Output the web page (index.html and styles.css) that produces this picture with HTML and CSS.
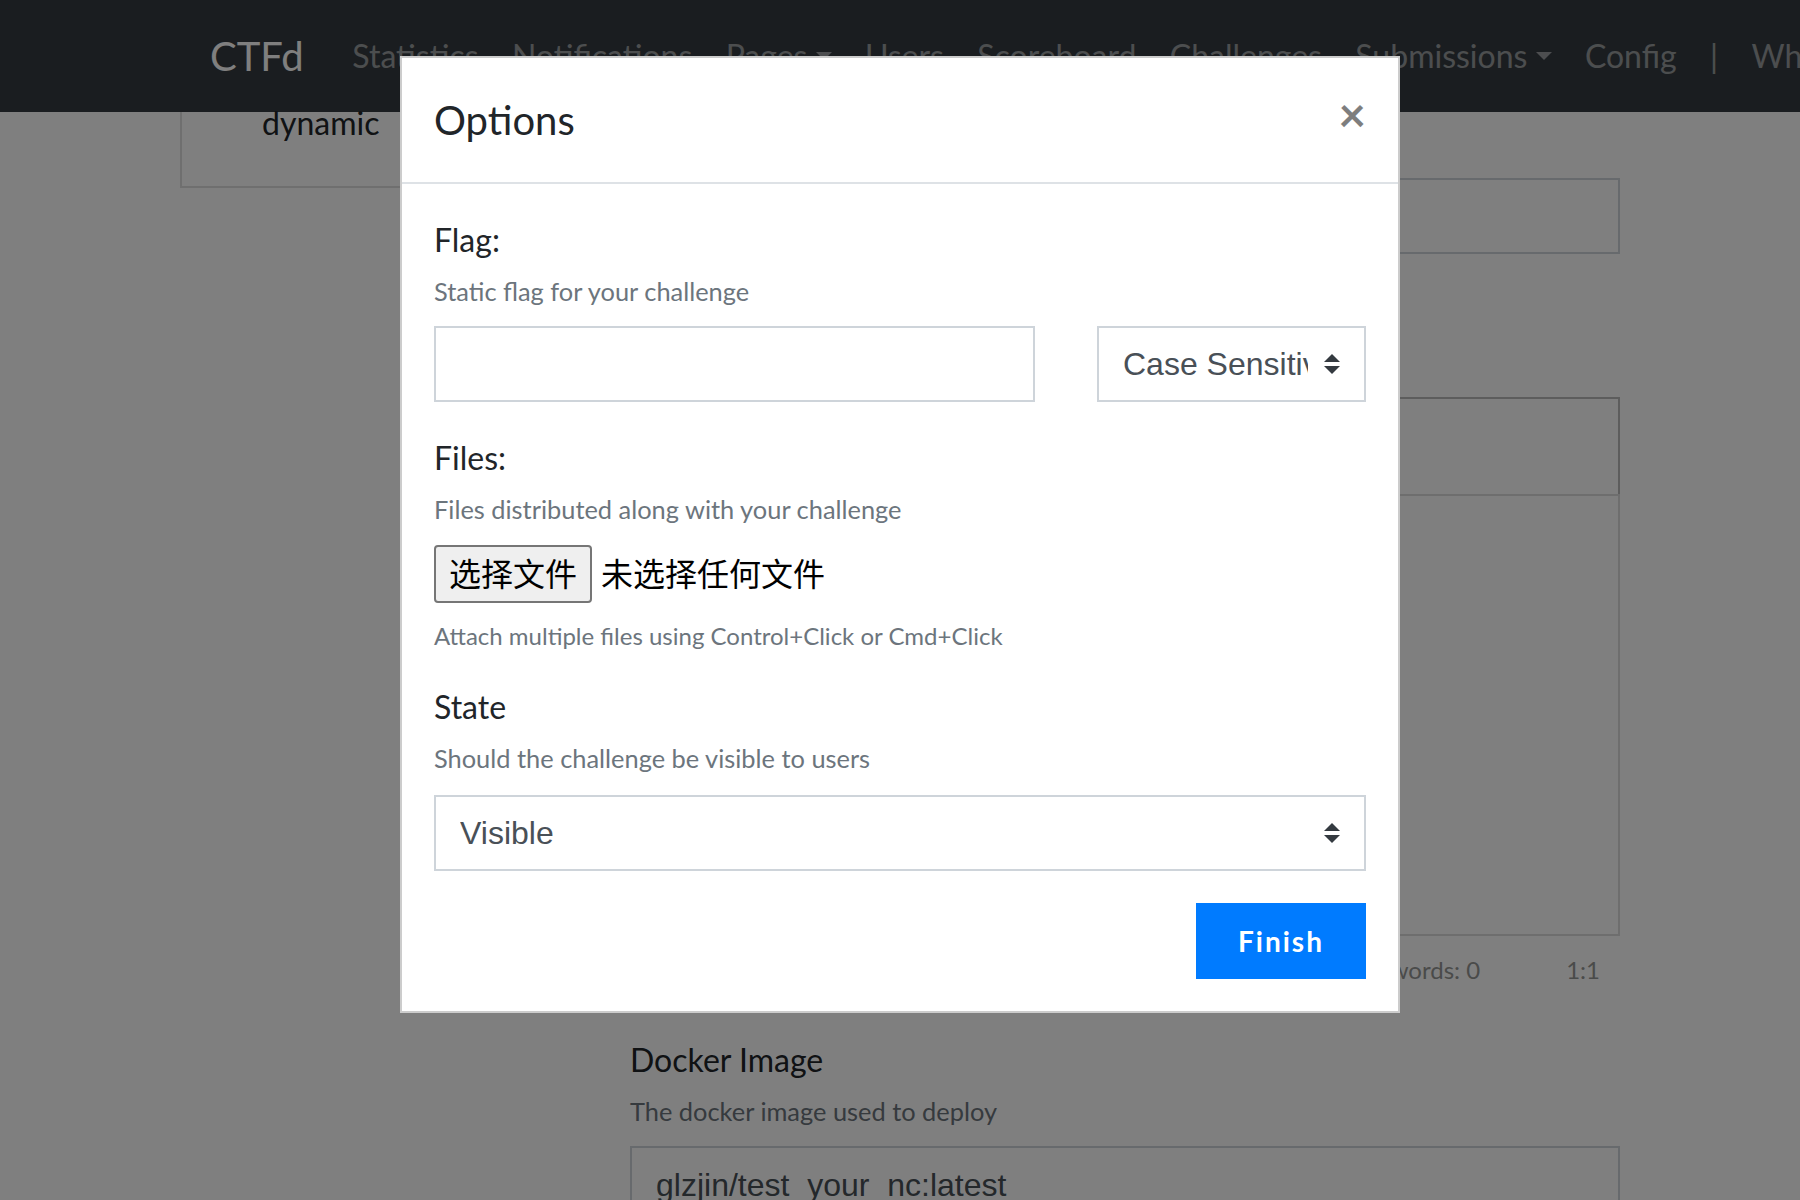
FILE: index.html
```html
<!DOCTYPE html>
<html lang="en">
<head>
<meta charset="utf-8">
<title>CTFd – Create Challenge</title>
<link rel="stylesheet" href="styles.css">
</head>
<body>
<nav class="navbar">
  <div class="nav-inner">
    <a class="brand">CTFd</a>
    <ul class="nav-links">
      <li class="nav-link">Statistics</li>
      <li class="nav-link">Notifications</li>
      <li class="nav-link dropdown">Pages</li>
      <li class="nav-link">Users</li>
      <li class="nav-link">Scoreboard</li>
      <li class="nav-link">Challenges</li>
      <li class="nav-link dropdown">Submissions</li>
      <li class="nav-link">Config</li>
      <li class="nav-link">|</li>
      <li class="nav-link">Whale</li>
    </ul>
  </div>
</nav>

<main class="page">
  <aside class="types">
    <div class="type-item">dynamic</div>
  </aside>
  <section class="create-form">
    <div class="bg-input first"></div>
    <div class="editor">
      <div class="editor-toolbar"></div>
      <div class="editor-area"></div>
      <div class="statusbar"><span class="lines">lines: 1</span><span class="words">words: 0</span><span class="cursor">1:1</span></div>
    </div>
    <div class="bg-group">
      <label class="field-label">Docker Image<small class="form-text">The docker image used to deploy</small></label>
      <div class="bg-input text">glzjin/test_your_nc:latest</div>
    </div>
  </section>
</main>

<div class="backdrop"></div>

<div class="modal">
  <div class="modal-dialog">
    <div class="modal-content">
      <div class="modal-header">
        <h5 class="modal-title">Options</h5>
        <button class="close" type="button">×</button>
      </div>
      <div class="modal-body">
        <div class="form-group">
          <label class="field-label">Flag:<small class="form-text">Static flag for your challenge</small></label>
          <div class="flag-row">
            <div class="form-control"></div>
            <div class="select">
              <span class="select-text">Case Sensitive</span>
              <svg class="select-arrow" viewBox="0 0 4 5" width="16" height="20"><path fill="#343a40" d="M2 0L0 2h4zm0 5L0 3h4z"/></svg>
            </div>
          </div>
        </div>
        <div class="form-group">
          <label class="field-label">Files:<small class="form-text">Files distributed along with your challenge</small></label>
          <div class="file-input"><button class="file-btn" type="button">选择文件</button><span class="file-status">未选择任何文件</span></div>
          <div class="help-line"><sub class="help-block">Attach multiple files using Control+Click or Cmd+Click</sub></div>
        </div>
        <div class="form-group">
          <label class="field-label state-label">State<small class="form-text">Should the challenge be visible to users</small></label>
          <div class="select">
            <span class="select-text">Visible</span>
            <svg class="select-arrow" viewBox="0 0 4 5" width="16" height="20"><path fill="#343a40" d="M2 0L0 2h4zm0 5L0 3h4z"/></svg>
          </div>
        </div>
        <div class="actions">
          <button class="btn-primary" type="button">Finish</button>
        </div>
      </div>
    </div>
  </div>
</div>
</body>
</html>
```

FILE: styles.css
```css
* { box-sizing: border-box; }

html, body {
  margin: 0;
  padding: 0;
  width: 1800px;
  height: 1200px;
  overflow: hidden;
}

body {
  background: #fff;
  font-family: "Lato", "Noto Sans CJK SC", sans-serif;
  font-size: 32px;
  line-height: 1.5;
  color: #212529;
}

/* ---------- navbar ---------- */
.navbar {
  background: #343a40;
  height: 112px;
  padding: 16px 0;
}
.nav-inner {
  width: 1440px;
  margin: 0 auto;
  padding: 0 30px;
  display: flex;
  align-items: center;
  white-space: nowrap;
}
.brand {
  font-size: 40px;
  line-height: 60px;
  padding: 10px 0;
  margin-right: 32px;
  color: #fff;
  flex-shrink: 0;
}
.nav-links {
  display: flex;
  flex-shrink: 0;
  list-style: none;
  margin: 0;
  padding: 0;
}
.nav-link {
  padding: 16px 16.7px;
  line-height: 48px;
  font-size: 32px;
  color: rgba(255, 255, 255, 0.5);
}
.dropdown::after {
  content: "";
  display: inline-block;
  margin-left: 0.255em;
  vertical-align: 0.255em;
  border-top: 0.25em solid;
  border-right: 0.25em solid transparent;
  border-bottom: 0;
  border-left: 0.25em solid transparent;
}

/* ---------- background page ---------- */
.page {
  width: 1440px;
  margin: 0 auto;
  display: flex;
}
.types {
  width: 450px;
  flex-shrink: 0;
}
.type-item {
  width: 400px;
  height: 76px;
  border: 2px solid rgba(0, 0, 0, 0.125);
  border-top: 0;
  padding-left: 80px;
  font-size: 32px;
  line-height: 22px;
}
.create-form {
  flex: 1;
  padding-top: 66px;
}
.bg-input {
  height: 76px;
  border: 2px solid #ced4da;
  background: #fff;
}
.bg-input.text {
  font-family: "Liberation Sans", Arial, sans-serif;
  font-size: 32px;
  line-height: 48px;
  padding: 13px 24px 0;
  color: #495057;
}
.editor {
  margin-top: 143px;
}
.editor-toolbar {
  height: 97px;
  border: 2px solid #bbb;
  border-bottom: 0;
}
.editor-area {
  height: 442px;
  border: 2px solid #ddd;
}
.statusbar {
  display: flex;
  justify-content: flex-end;
  padding: 16px 20px;
  font-size: 24px;
  line-height: 36px;
  color: #959694;
}
.statusbar .lines { margin-right: 24px; }
.statusbar .words { margin-right: 86px; }
.bg-group {
  margin-top: 32px;
}

/* ---------- modal ---------- */
.backdrop {
  position: fixed;
  inset: 0;
  background: rgba(0, 0, 0, 0.5);
}
.modal {
  position: fixed;
  inset: 0;
  overflow: hidden;
}
.modal-dialog {
  width: 1000px;
  margin: 56px auto 0;
}
.modal-content {
  background: #fff;
  border: 2px solid rgba(0, 0, 0, 0.2);
}
.modal-header {
  display: flex;
  align-items: flex-start;
  justify-content: space-between;
  padding: 32px;
  border-bottom: 2px solid #dee2e6;
}
.modal-title {
  margin: 0;
  font-size: 40px;
  font-weight: 400;
  line-height: 60px;
  color: #212529;
}
.close {
  font-family: "Lato", sans-serif;
  background: transparent;
  border: 0;
  padding: 32px;
  margin: -32px -32px -32px auto;
  font-size: 48px;
  font-weight: 700;
  line-height: 1;
  color: #000;
  opacity: 0.5;
  text-shadow: 0 2px 0 #fff;
}
.modal-body {
  padding: 32px;
}
.form-group {
  margin-bottom: 32px;
}
.field-label {
  display: block;
  margin-bottom: 16px;
  font-size: 32px;
  line-height: 48px;
  color: #212529;
}
.state-label {
  margin-bottom: 18px;
}
.form-text {
  display: block;
  margin-top: 8px;
  font-size: 25.4px;
  line-height: 38.4px;
  color: #6c757d;
}
.flag-row {
  display: grid;
  grid-template-columns: 601px 269px;
  column-gap: 62px;
}
.form-control {
  height: 76px;
  border: 2px solid #ced4da;
  background: #fff;
}
.select {
  height: 76px;
  border: 2px solid #ced4da;
  background: #fff;
  display: flex;
  align-items: center;
  padding-left: 24px;
  font-family: "Liberation Sans", Arial, sans-serif;
  font-size: 32px;
  color: #495057;
}
.select-text {
  flex: 1;
  min-width: 0;
  overflow: hidden;
  white-space: nowrap;
}
.select-arrow {
  flex-shrink: 0;
  margin: 0 24px 0 16px;
}
.file-input {
  display: flex;
  align-items: center;
  height: 58px;
}
.file-btn {
  height: 58px;
  padding: 0 13px;
  border: 2px solid #767676;
  border-radius: 4px;
  background: #efefef;
  color: #000;
  font-family: "Lato", "Noto Sans CJK SC", sans-serif;
  font-size: 32px;
  line-height: 1;
}
.file-status {
  margin-left: 9px;
  font-size: 32px;
  color: #000;
}
.help-line {
  line-height: 48px;
}
.help-block {
  position: relative;
  bottom: -6px;
  vertical-align: baseline;
  font-size: 24px;
  line-height: 0;
  color: #6c757d;
}
.actions {
  display: flex;
  justify-content: flex-end;
}
.btn-primary {
  width: 170px;
  height: 76px;
  border: 0;
  background: #007bff;
  color: #fff;
  font-family: "Lato", sans-serif;
  font-size: 28px;
  font-weight: 700;
  letter-spacing: 2px;
}
```
